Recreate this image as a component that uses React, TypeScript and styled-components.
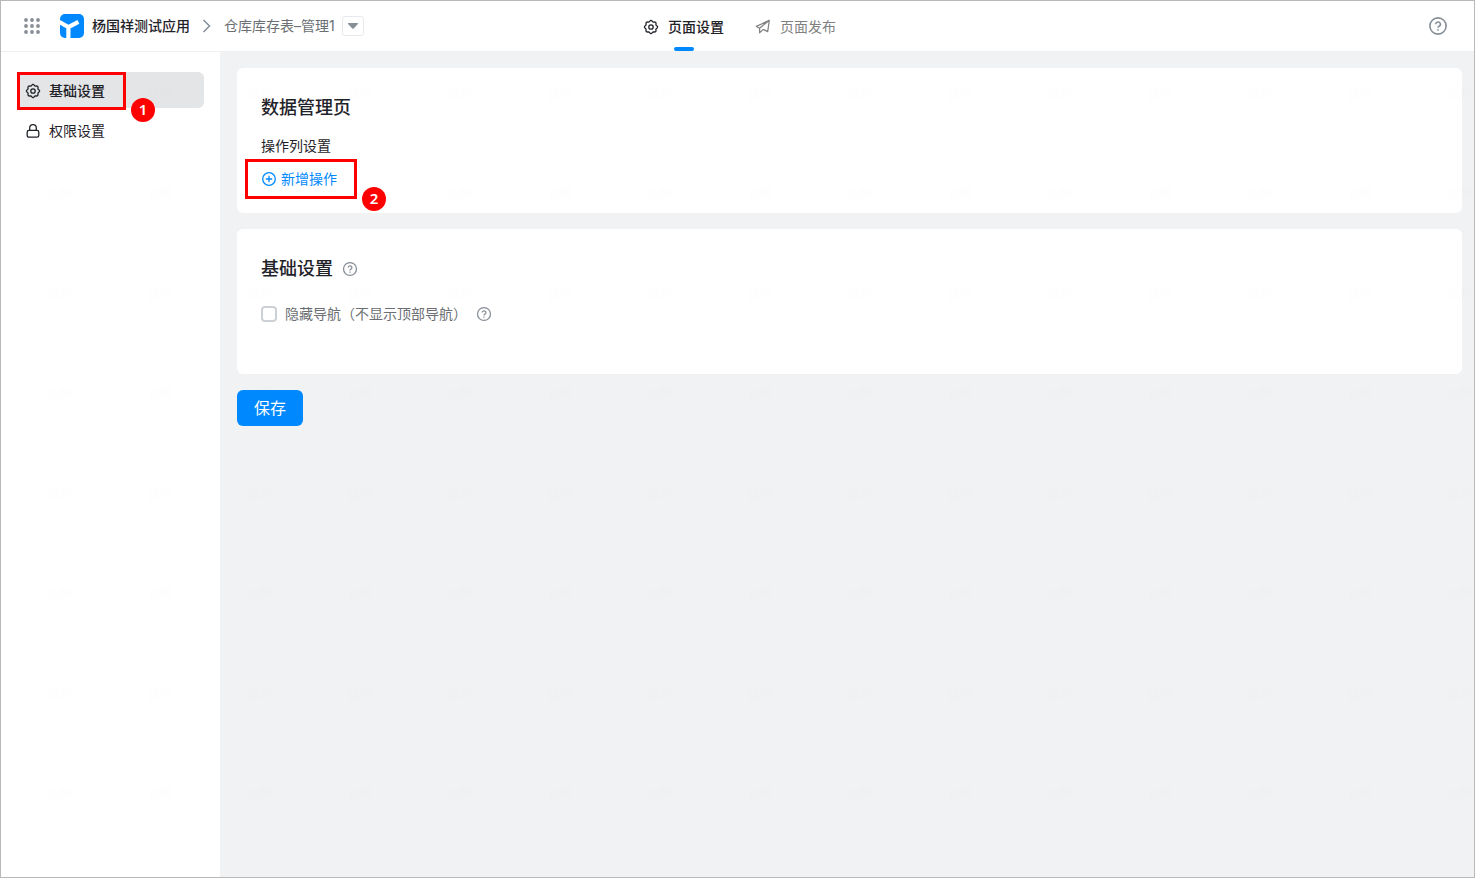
import React from "react";
import styled, { createGlobalStyle } from "styled-components";

const Global = createGlobalStyle`
  *, *::before, *::after { box-sizing: border-box; }
  body { margin: 0; background: #fff; }
  button, input { font: inherit; }
`;

const Page = styled.div`
  position: relative;
  display: flex;
  flex-direction: column;
  min-height: 100vh;
  border: 1px solid #b8b8b8;
  background: #fff;
  color: #1f2329;
  font: 14px/20px Inter, "Noto Sans CJK SC", sans-serif;
`;

const Header = styled.header`
  display: grid;
  grid-template-columns: 1fr auto 1fr;
  height: 51px;
  border-bottom: 1px solid #eff0f2;
`;

const Crumbs = styled.nav`
  display: flex;
  align-items: center;
  padding-left: 22px;
`;

const IconButton = styled.button`
  display: flex;
  align-items: center;
  justify-content: center;
  padding: 0;
  border: 0;
  background: none;
  color: #868e96;
  cursor: pointer;
`;

const AppLink = styled.a`
  display: flex;
  align-items: center;
  gap: 8px;
  margin: 0 12px 0 19px;
  color: #1f2329;
  font-weight: 500;
  text-decoration: none;
`;

const PageName = styled.span`
  margin: 0 7px 0 12px;
  color: #6b6f73;
`;

const SwitchButton = styled(IconButton)`
  width: 22px;
  height: 20px;
  border: 1px solid #e6e8eb;
  border-radius: 3px;
`;

const Tabs = styled.nav`
  display: flex;
  gap: 31px;
  padding-left: 4px;
`;

const Tab = styled.a<{ $active?: boolean }>`
  position: relative;
  display: flex;
  align-items: center;
  gap: 9px;
  padding-top: 2px;
  color: ${(p) => (p.$active ? "#1f2329" : "#808080")};
  font-weight: ${(p) => (p.$active ? 500 : 400)};
  text-decoration: none;

  &::after {
    content: "";
    display: ${(p) => (p.$active ? "block" : "none")};
    position: absolute;
    bottom: 0;
    left: 50%;
    width: 20px;
    height: 4px;
    margin-left: -10px;
    border-radius: 2px;
    background: #0089ff;
  }
`;

const HeaderEnd = styled.div`
  display: flex;
  align-items: center;
  justify-content: flex-end;
  padding-right: 26px;
`;

const Body = styled.div`
  display: flex;
  flex: 1;
`;

const Sidebar = styled.nav`
  display: flex;
  flex-direction: column;
  gap: 4px;
  flex: none;
  width: 219px;
  padding: 20px 16px;
`;

const SideItem = styled.a<{ $active?: boolean }>`
  position: relative;
  display: flex;
  align-items: center;
  gap: 8px;
  height: 36px;
  padding: 2px 8px 0;
  border-radius: 6px;
  background: ${(p) => (p.$active ? "#e4e5e7" : "transparent")};
  color: #1f2329;
  font-weight: ${(p) => (p.$active ? 500 : 400)};
  text-decoration: none;
`;

const Main = styled.main`
  display: flex;
  flex-direction: column;
  align-items: flex-start;
  gap: 16px;
  flex: 1;
  padding: 16px 12px 16px 17px;
  background: #f0f2f4;
`;

const Card = styled.section`
  align-self: stretch;
  min-height: 145px;
  padding: 24px 24px 0;
  border-radius: 6px;
  background: #fff;
`;

const CardTitle = styled.h2`
  display: flex;
  align-items: center;
  gap: 9px;
  margin: 0;
  font-size: 18px;
  font-weight: 500;
  line-height: 32px;
`;

const FieldName = styled.h3`
  margin: 12px 0 13px;
  font-size: 14px;
  font-weight: 400;
  line-height: 20px;
`;

const AddButton = styled(IconButton)`
  position: relative;
  gap: 4px;
  color: #0089ff;
`;

const CheckRow = styled.div`
  display: flex;
  align-items: center;
  gap: 9px;
  margin-top: 19px;
`;

const CheckLabel = styled.label`
  display: flex;
  align-items: center;
  gap: 8px;
  color: #6b6f73;
`;

const Checkbox = styled.input`
  appearance: none;
  width: 16px;
  height: 16px;
  margin: 0;
  border: 2px solid #cdd1d5;
  border-radius: 4px;
  background: #fff;
  &:checked { border-color: #0089ff; background: #0089ff; }
`;

const SaveButton = styled.button`
  height: 36px;
  padding: 0 17px;
  border: 0;
  border-radius: 6px;
  background: #0089ff;
  color: #fff;
  font-size: 16px;
  cursor: pointer;
`;

const Highlight = styled.span<{ $w: number; $h: number; $x: number; $y: number }>`
  position: absolute;
  left: ${(p) => p.$x}px;
  top: ${(p) => p.$y}px;
  width: ${(p) => p.$w}px;
  height: ${(p) => p.$h}px;
  border: 3px solid #f00;
  pointer-events: none;
`;

const Step = styled.span`
  position: absolute;
  left: 100%;
  bottom: -15px;
  width: 24px;
  height: 24px;
  margin-left: 8px;
  border-radius: 50%;
  background: #f00;
  color: #fff;
  font: 600 15px/22px "Noto Sans", sans-serif;
  text-align: center;
`;

const Watermark = styled.svg`
  position: absolute;
  inset: 0;
  width: 100%;
  height: 100%;
  pointer-events: none;
`;

const GridIcon = () => (
  <svg width="18" height="18" viewBox="0 0 18 18" fill="currentColor" aria-hidden="true">
    {[3, 9, 15].map((y) => [3, 9, 15].map((x) => <circle key={`${x}-${y}`} cx={x} cy={y} r="1.9" />))}
  </svg>
);

const Logo = () => (
  <svg width="24" height="24" viewBox="0 0 24 24" aria-hidden="true">
    <rect width="24" height="24" rx="5" fill="#0089ff" />
    <path d="M-1 7.8 8.4 13.1 18.4 7.9M8.4 12.5V25" fill="none" stroke="#fff" strokeWidth="4.2" />
  </svg>
);

const Chevron = () => (
  <svg width="10" height="14" viewBox="0 0 10 14" fill="none" stroke="#868e96" strokeWidth="1.5" aria-hidden="true">
    <path d="m1.5 1 6 6-6 6" />
  </svg>
);

const Caret = () => (
  <svg width="12" height="8" viewBox="0 0 12 8" fill="#868e96" aria-hidden="true">
    <path d="M1.5 1h9a.6.6 0 0 1 .4 1L6.7 6.5a1 1 0 0 1-1.4 0L1.1 2a.6.6 0 0 1 .4-1Z" />
  </svg>
);

const gearPath = Array.from({ length: 64 }, (_, i) => {
  const a = (i / 64) * Math.PI * 2;
  const r = 6 + 0.6 * Math.cos(a * 8);
  return `${i ? "L" : "M"}${(8 + r * Math.sin(a)).toFixed(2)} ${(8 - r * Math.cos(a)).toFixed(2)}`;
}).join("") + "Z";

const Gear = () => (
  <svg width="16" height="16" viewBox="0 0 16 16" fill="none" stroke="currentColor" strokeWidth="1.3" strokeLinejoin="round" aria-hidden="true">
    <path d={gearPath} />
    <circle cx="8" cy="8" r="2.2" />
  </svg>
);

const Plane = () => (
  <svg width="16" height="16" viewBox="0 0 16 16" fill="none" stroke="currentColor" strokeWidth="1.2" strokeLinejoin="round" aria-hidden="true">
    <path d="M4.6 9.2 1.4 7.4 14.3 1.3 12.7 12.6 8.2 10.4M14.3 1.3 4.6 9.2v4.6l3.6-3.4" />
  </svg>
);

const Lock = () => (
  <svg width="16" height="16" viewBox="0 0 16 16" fill="none" stroke="currentColor" strokeWidth="1.3" aria-hidden="true">
    <rect x="2.2" y="7.4" width="11.6" height="6.8" rx="1.8" />
    <path d="M4.7 7.4V5a3.3 3.3 0 0 1 6.6 0v2.4" />
  </svg>
);

const PlusCircle = () => (
  <svg width="16" height="16" viewBox="0 0 16 16" fill="none" stroke="currentColor" strokeWidth="1.3" aria-hidden="true">
    <circle cx="8" cy="8" r="6.3" />
    <path d="M8 4.8v6.4M4.8 8h6.4" />
  </svg>
);

const Question = ({ size }: { size: number }) => (
  <svg width={size} height={size} viewBox="0 0 20 20" fill="none" stroke="#868e96" strokeWidth="1.6" aria-hidden="true">
    <circle cx="10" cy="10" r="8.1" />
    <path d="M7.7 8.2a2.35 2.2 0 1 1 3.4 2c-.8.4-1.1.8-1.1 1.6" />
    <circle cx="10" cy="13.9" r=".6" fill="#868e96" strokeWidth=".6" />
  </svg>
);

export default function App() {
  return (
    <Page>
      <Global />
      <Header>
        <Crumbs aria-label="路径">
          <IconButton aria-label="应用"><GridIcon /></IconButton>
          <AppLink href="#app"><Logo />杨国祥测试应用</AppLink>
          <Chevron />
          <PageName>仓库库存表–管理1</PageName>
          <SwitchButton aria-label="切换页面"><Caret /></SwitchButton>
        </Crumbs>
        <Tabs>
          <Tab href="#settings" $active><Gear />页面设置</Tab>
          <Tab href="#publish"><Plane />页面发布</Tab>
        </Tabs>
        <HeaderEnd>
          <IconButton aria-label="帮助"><Question size={20} /></IconButton>
        </HeaderEnd>
      </Header>
      <Body>
        <Sidebar>
          <SideItem href="#basic" $active>
            <Gear />基础设置
            <Highlight $x={0} $y={0} $w={109} $h={38}><Step>1</Step></Highlight>
          </SideItem>
          <SideItem href="#permission"><Lock />权限设置</SideItem>
        </Sidebar>
        <Main>
          <Card>
            <CardTitle>数据管理页</CardTitle>
            <FieldName>操作列设置</FieldName>
            <AddButton>
              <PlusCircle />新增操作
              <Highlight $x={-16} $y={-10} $w={112} $h={40}><Step>2</Step></Highlight>
            </AddButton>
          </Card>
          <Card>
            <CardTitle>
              基础设置
              <IconButton aria-label="基础设置说明"><Question size={16} /></IconButton>
            </CardTitle>
            <CheckRow>
              <CheckLabel><Checkbox type="checkbox" />隐藏导航（不显示顶部导航）</CheckLabel>
              <IconButton aria-label="隐藏导航说明"><Question size={16} /></IconButton>
            </CheckRow>
          </Card>
          <SaveButton>保存</SaveButton>
        </Main>
      </Body>
      <Watermark aria-hidden="true">
        <pattern id="watermark" y="51" width="100" height="100" patternUnits="userSpaceOnUse">
          <text x="48" y="48" fontSize="12" fillOpacity="0.008" transform="rotate(-10 48 48)">秋阳</text>
        </pattern>
        <rect y="51" width="100%" height="100%" fill="url(#watermark)" />
      </Watermark>
    </Page>
  );
}
